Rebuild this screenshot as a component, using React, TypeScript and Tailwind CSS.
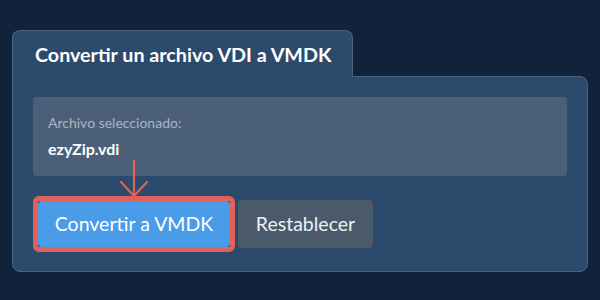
export default function App() {
  return (
    <div
      className="w-[600px] h-[300px] bg-[#10233a] px-3 pt-[30px]"
      style={{ fontFamily: "Lato, 'Noto Sans', sans-serif" }}
    >
      <div className="flex">
        <div className="relative z-10 -mb-px w-[341px] rounded-t-lg border border-b-0 border-[#4a6383] bg-[#2c4a6b] pl-[22px] pt-[10px] pb-[8px]">
          <h1 className="text-[19.7px] leading-7 font-bold text-white">
            Convertir un archivo VDI a VMDK
          </h1>
        </div>
      </div>
      <div className="rounded-lg rounded-tl-none border border-[#4a6383] bg-[#2c4a6b] px-5 pt-5 pb-[19px]">
        <div className="rounded bg-[#4b6078] px-[15px] pt-4 pb-[15px]">
          <p className="text-[14px] leading-5 text-[#a9b5c4]">Archivo seleccionado:</p>
          <p className="mt-1 text-[16px] leading-6 font-bold text-white">ezyZip.vdi</p>
        </div>
        <div className="mt-5 flex items-center gap-[3px]">
          <div className="relative rounded-md border-[5px] border-[#e0605a]">
            <svg
              className="absolute bottom-full left-1/2 -translate-x-1/2 mb-[3px]"
              width="30"
              height="38"
              viewBox="0 0 30 38"
              fill="none"
              stroke="#e0605a"
              strokeWidth="2.2"
              strokeLinecap="round"
              strokeLinejoin="round"
            >
              <path d="M15 1 V36" />
              <path d="M2 22 L15 36 L28 22" />
            </svg>
            <button className="flex h-[46px] w-[192px] items-center justify-center rounded-sm bg-[#4a9be8] text-[19.5px] text-white">
              Convertir a VMDK
            </button>
          </div>
          <button className="flex h-12 w-[135px] items-center justify-center rounded bg-[#4a5a6b] text-[19.5px] text-[#eef1f4]">
            Restablecer
          </button>
        </div>
      </div>
    </div>
  );
}
